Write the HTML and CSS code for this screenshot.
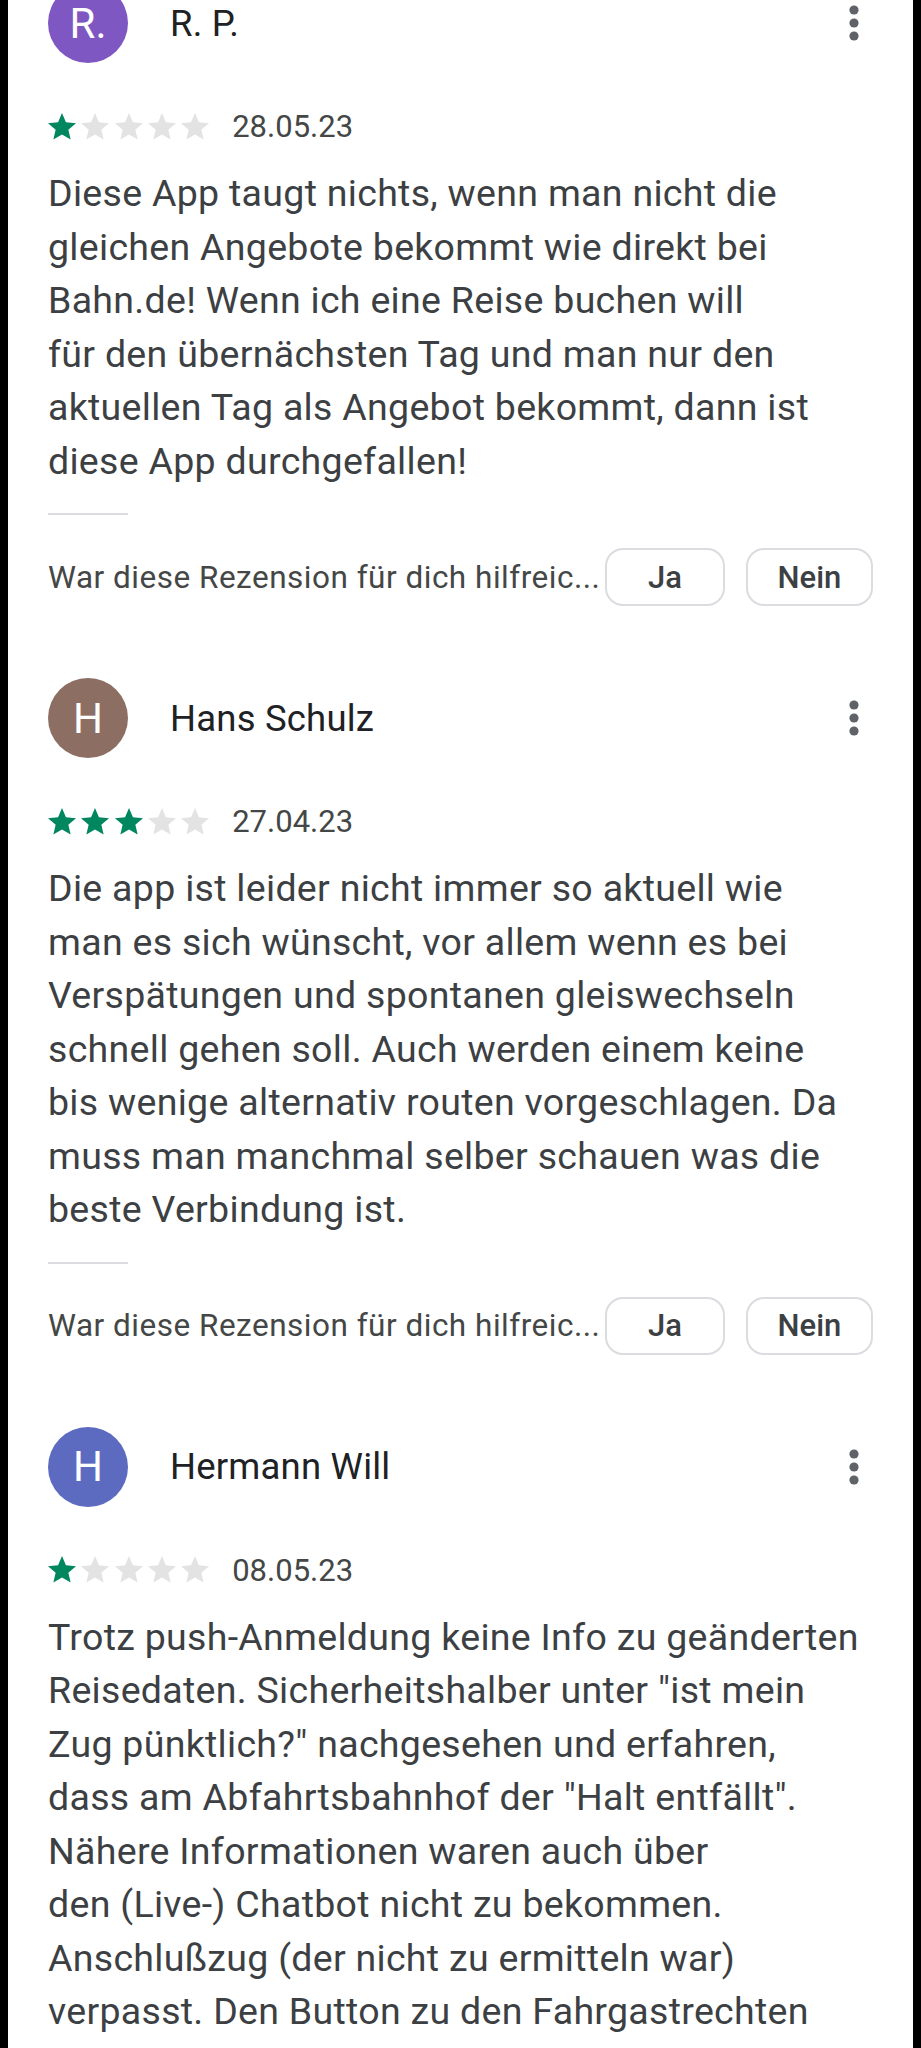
FILE: index.html
```html
<!DOCTYPE html>
<html lang="de">
<head>
<meta charset="utf-8">
<title>Rezensionen</title>
<link rel="stylesheet" href="styles.css">
</head>
<body>
<div class="page">

  <section class="review review-first">
    <div class="head">
      <div class="avatar av-purple">R.</div>
      <div class="name">R. P.</div>
      <svg class="kebab" viewBox="0 0 10 36" width="10" height="36"><circle cx="5" cy="5" r="4.6"/><circle cx="5" cy="18" r="4.6"/><circle cx="5" cy="31" r="4.6"/></svg>
    </div>
    <div class="meta">
      <div class="stars">
        <svg class="star on" viewBox="2 2 20 20"><path d="M12 17.27L18.18 21l-1.64-7.03L22 9.24l-7.19-.61L12 2 9.19 8.63 2 9.24l5.46 4.73L5.82 21z"/></svg>
        <svg class="star" viewBox="2 2 20 20"><path d="M12 17.27L18.18 21l-1.64-7.03L22 9.24l-7.19-.61L12 2 9.19 8.63 2 9.24l5.46 4.73L5.82 21z"/></svg>
        <svg class="star" viewBox="2 2 20 20"><path d="M12 17.27L18.18 21l-1.64-7.03L22 9.24l-7.19-.61L12 2 9.19 8.63 2 9.24l5.46 4.73L5.82 21z"/></svg>
        <svg class="star" viewBox="2 2 20 20"><path d="M12 17.27L18.18 21l-1.64-7.03L22 9.24l-7.19-.61L12 2 9.19 8.63 2 9.24l5.46 4.73L5.82 21z"/></svg>
        <svg class="star" viewBox="2 2 20 20"><path d="M12 17.27L18.18 21l-1.64-7.03L22 9.24l-7.19-.61L12 2 9.19 8.63 2 9.24l5.46 4.73L5.82 21z"/></svg>
      </div>
      <span class="date">28.05.23</span>
    </div>
    <p class="text">Diese App taugt nichts, wenn man nicht die<br>gleichen Angebote bekommt wie direkt bei<br>Bahn.de! Wenn ich eine Reise buchen will<br>für den übernächsten Tag und man nur den<br>aktuellen Tag als Angebot bekommt, dann ist<br>diese App durchgefallen!</p>
    <div class="divider"></div>
    <div class="helpful">
      <span class="question">War diese Rezension für dich hilfreic...</span>
      <button class="btn">Ja</button>
      <button class="btn">Nein</button>
    </div>
  </section>

  <section class="review">
    <div class="head">
      <div class="avatar av-brown">H</div>
      <div class="name">Hans Schulz</div>
      <svg class="kebab" viewBox="0 0 10 36" width="10" height="36"><circle cx="5" cy="5" r="4.6"/><circle cx="5" cy="18" r="4.6"/><circle cx="5" cy="31" r="4.6"/></svg>
    </div>
    <div class="meta">
      <div class="stars">
        <svg class="star on" viewBox="2 2 20 20"><path d="M12 17.27L18.18 21l-1.64-7.03L22 9.24l-7.19-.61L12 2 9.19 8.63 2 9.24l5.46 4.73L5.82 21z"/></svg>
        <svg class="star on" viewBox="2 2 20 20"><path d="M12 17.27L18.18 21l-1.64-7.03L22 9.24l-7.19-.61L12 2 9.19 8.63 2 9.24l5.46 4.73L5.82 21z"/></svg>
        <svg class="star on" viewBox="2 2 20 20"><path d="M12 17.27L18.18 21l-1.64-7.03L22 9.24l-7.19-.61L12 2 9.19 8.63 2 9.24l5.46 4.73L5.82 21z"/></svg>
        <svg class="star" viewBox="2 2 20 20"><path d="M12 17.27L18.18 21l-1.64-7.03L22 9.24l-7.19-.61L12 2 9.19 8.63 2 9.24l5.46 4.73L5.82 21z"/></svg>
        <svg class="star" viewBox="2 2 20 20"><path d="M12 17.27L18.18 21l-1.64-7.03L22 9.24l-7.19-.61L12 2 9.19 8.63 2 9.24l5.46 4.73L5.82 21z"/></svg>
      </div>
      <span class="date">27.04.23</span>
    </div>
    <p class="text">Die app ist leider nicht immer so aktuell wie<br>man es sich wünscht, vor allem wenn es bei<br>Verspätungen und spontanen gleiswechseln<br>schnell gehen soll. Auch werden einem keine<br>bis wenige alternativ routen vorgeschlagen. Da<br>muss man manchmal selber schauen was die<br>beste Verbindung ist.</p>
    <div class="divider"></div>
    <div class="helpful">
      <span class="question">War diese Rezension für dich hilfreic...</span>
      <button class="btn">Ja</button>
      <button class="btn">Nein</button>
    </div>
  </section>

  <section class="review">
    <div class="head">
      <div class="avatar av-indigo">H</div>
      <div class="name">Hermann Will</div>
      <svg class="kebab" viewBox="0 0 10 36" width="10" height="36"><circle cx="5" cy="5" r="4.6"/><circle cx="5" cy="18" r="4.6"/><circle cx="5" cy="31" r="4.6"/></svg>
    </div>
    <div class="meta">
      <div class="stars">
        <svg class="star on" viewBox="2 2 20 20"><path d="M12 17.27L18.18 21l-1.64-7.03L22 9.24l-7.19-.61L12 2 9.19 8.63 2 9.24l5.46 4.73L5.82 21z"/></svg>
        <svg class="star" viewBox="2 2 20 20"><path d="M12 17.27L18.18 21l-1.64-7.03L22 9.24l-7.19-.61L12 2 9.19 8.63 2 9.24l5.46 4.73L5.82 21z"/></svg>
        <svg class="star" viewBox="2 2 20 20"><path d="M12 17.27L18.18 21l-1.64-7.03L22 9.24l-7.19-.61L12 2 9.19 8.63 2 9.24l5.46 4.73L5.82 21z"/></svg>
        <svg class="star" viewBox="2 2 20 20"><path d="M12 17.27L18.18 21l-1.64-7.03L22 9.24l-7.19-.61L12 2 9.19 8.63 2 9.24l5.46 4.73L5.82 21z"/></svg>
        <svg class="star" viewBox="2 2 20 20"><path d="M12 17.27L18.18 21l-1.64-7.03L22 9.24l-7.19-.61L12 2 9.19 8.63 2 9.24l5.46 4.73L5.82 21z"/></svg>
      </div>
      <span class="date">08.05.23</span>
    </div>
    <p class="text">Trotz push-Anmeldung keine Info zu geänderten<br>Reisedaten. Sicherheitshalber unter "ist mein<br>Zug pünktlich?" nachgesehen und erfahren,<br>dass am Abfahrtsbahnhof der "Halt entfällt".<br>Nähere Informationen waren auch über<br>den (Live-) Chatbot nicht zu bekommen.<br>Anschlußzug (der nicht zu ermitteln war)<br>verpasst. Den Button zu den Fahrgastrechten</p>
  </section>

</div>
</body>
</html>
```

FILE: styles.css
```css
html, body {
  margin: 0;
  padding: 0;
  background: #000;
}

body {
  width: 921px;
  height: 2048px;
  overflow: hidden;
  font-family: Roboto, "Noto Sans", "Liberation Sans", sans-serif;
}

.page {
  margin: 0 8px;
  height: 2048px;
  background: #fff;
  overflow: hidden;
}

.review {
  padding: 0 8px 0 40px;
  margin-top: 72px;
}

.review-first {
  margin-top: -17px;
}

.head {
  display: flex;
  align-items: center;
  height: 80px;
}

.avatar {
  width: 80px;
  height: 80px;
  border-radius: 50%;
  color: #fff;
  font-size: 42px;
  display: flex;
  align-items: center;
  justify-content: center;
  flex-shrink: 0;
}

.av-purple { background: #7e57c2; }
.av-brown { background: #8d6e63; }
.av-indigo { background: #5c6bc0; }

.name {
  margin-left: 42px;
  font-size: 36.5px;
  letter-spacing: 0.2px;
  color: #202124;
  flex: 1;
}

.kebab {
  fill: #5f6368;
  margin-right: 46px;
  flex-shrink: 0;
}

.meta {
  display: flex;
  align-items: center;
  height: 36px;
  margin-top: 45.5px;
}

.stars {
  display: flex;
  gap: 5.3px;
}

.star {
  width: 28px;
  height: 28px;
  fill: #e3e3e3;
}

.star.on {
  fill: #01875f;
}

.date {
  margin-left: 23px;
  font-size: 31px;
  color: #444746;
}

.text {
  margin: 22.5px 0 0;
  font-size: 37.5px;
  letter-spacing: 0.3px;
  line-height: 53.5px;
  color: #3c4043;
  white-space: nowrap;
}

.divider {
  width: 80px;
  height: 2px;
  background: #dadce0;
  margin-top: 25px;
}

.helpful {
  display: flex;
  align-items: center;
  margin-top: 33px;
  height: 58px;
}

.question {
  font-size: 31.5px;
  letter-spacing: 0.5px;
  color: #444746;
  white-space: nowrap;
  overflow: hidden;
  text-overflow: ellipsis;
  width: 557px;
  flex-shrink: 0;
}

.btn {
  font-family: inherit;
  font-size: 31px;
  font-weight: 500;
  color: #3c4043;
  background: #fff;
  border: 2px solid #dadce0;
  border-radius: 18px;
  height: 58px;
  width: 120px;
  padding: 0;
  margin-right: 21px;
  flex-shrink: 0;
}

.btn + .btn {
  width: 127px;
}
```
